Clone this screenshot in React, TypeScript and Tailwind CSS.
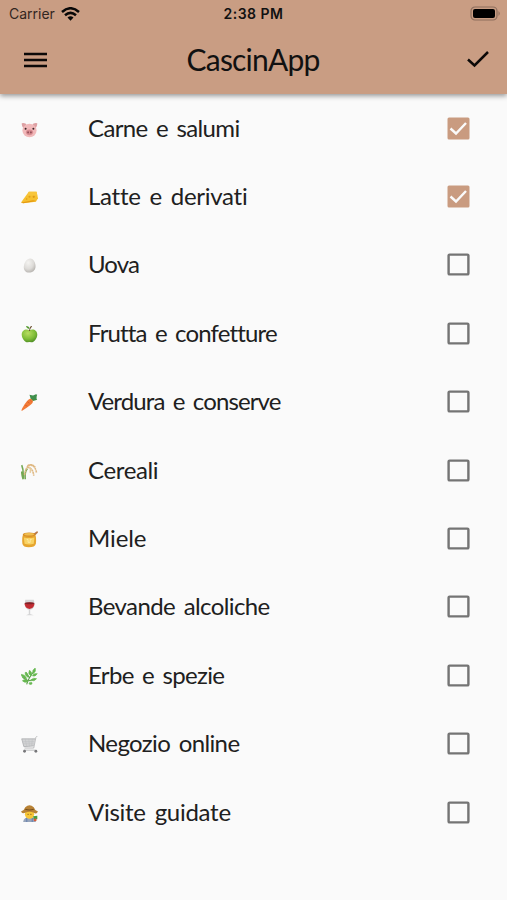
import type { ReactNode } from "react";

const Pig = () => (
  <>
    <path d="M1 3 Q7 2 8 6 L6 12 Q1 9 1 3ZM23 3 Q17 2 16 6 L18 12 Q23 9 23 3Z" fill="#dda0a3" />
    <ellipse cx="12" cy="13.5" rx="10" ry="9.5" fill="#f1b9ba" />
    <ellipse cx="12" cy="16" rx="5" ry="4" fill="#d98c92" />
    <circle cx="6.5" cy="11" r="1.4" fill="#3b2226" />
    <circle cx="17.5" cy="11" r="1.4" fill="#3b2226" />
    <ellipse cx="10" cy="16" rx="1" ry="1.7" fill="#8a4850" />
    <ellipse cx="14" cy="16" rx="1" ry="1.7" fill="#8a4850" />
  </>
);
const Cheese = () => (
  <>
    <path d="M0 19 L11 4 L22 4 L24 13 L21 18 L3 20Z" fill="#f6c02f" />
    <path d="M11 4 L22 4 L23 9 L9 9Z" fill="#f8c63c" />
    <path d="M0 19 L17 16 L22 17 L3 20Z" fill="#e59a12" />
    <circle cx="12" cy="11" r="1.4" fill="#e0a01b" />
    <circle cx="18" cy="11" r="1.6" fill="#dd9a19" />
    <circle cx="8" cy="14" r="1" fill="#dd9a19" />
  </>
);
const Egg = () => (
  <>
    <defs>
      <radialGradient id="egg" cx="0.38" cy="0.3" r="0.75">
        <stop offset="0" stopColor="#f4f3f1" />
        <stop offset="0.6" stopColor="#dddbd8" />
        <stop offset="1" stopColor="#b4b1ad" />
      </radialGradient>
    </defs>
    <path d="M13 2 C18 2 21 9 20.500 14 C20 19 16 22 11.500 22 C6 22 3.500 18 4 13 C4.500 8 8 2 13 2Z" fill="url(#egg)" />
  </>
);
const Apple = () => (
  <>
    <defs>
      <radialGradient id="apple" cx="0.4" cy="0.3" r="0.75">
        <stop offset="0" stopColor="#b8dd62" />
        <stop offset="0.6" stopColor="#7fbd37" />
        <stop offset="1" stopColor="#4c8b25" />
      </radialGradient>
    </defs>
    <path d="M12 6 C17 3 23 6 23 12 C23 18 18 23 15 23 Q12 22 9 23 C6 23 1 18 1 12 C1 6 7 3 12 6Z" fill="url(#apple)" />
    <path d="M12 7 Q12 3 15 0" stroke="#694d2d" strokeWidth="1.500" fill="none" />
    <path d="M12 4 Q8 4 7 0 Q12 0 12 4Z" fill="#559b31" />
  </>
);
const Carrot = () => (
  <>
    <path d="M14 8 Q19 2 23 1 L20 6 L23 8 L17 10Z" fill="#468a3a" />
    <path d="M12 1 L17 2 L22 0 L22 8 L14 8Z" fill="#3f8f4c" />
    <path d="M12 7 Q16 6 17 11 Q16 15 1 24 Q0 23 3 18 Q8 9 12 7Z" fill="#f27b38" />
    <path d="M9 11 l3 2 M6 16 l3 1 M13 9 l2 2" stroke="#d65725" />
  </>
);
const Rice = () => (
  <>
    <path d="M3 23 Q4 10 1 3 M6 23 Q5 12 9 8 M3 23 Q1 16 1 12" stroke="#73a853" strokeWidth="2.200" fill="none" />
    <path d="M5 17 Q7 4 13 3 Q20 3 22 14 M9 6 Q17 7 18 18 M9 4 Q15 0 20 6" stroke="#dfb984" strokeWidth="2.200" strokeDasharray="3 .6" fill="none" />
    <path d="M12 6 Q14 8 13 14" stroke="#e7ce9f" strokeWidth="2" fill="none" />
  </>
);
const Honey = () => (
  <>
    <path d="M16 5 L23 0 L24 2 L19 7Z" fill="#b7794b" />
    <path d="M3 5 Q1 9 2 18 Q3 23 11 23 Q20 23 21 18 Q22 9 20 5Z" fill="#e6a52e" />
    <ellipse cx="11.500" cy="5" rx="9" ry="3" fill="#d58c26" />
    <ellipse cx="11.500" cy="4.500" rx="7" ry="1.700" fill="#f0be50" />
    <path d="M4 9 Q12 11 19 9 L18 18 Q12 20 5 18Z" fill="#f9d364" />
    <path d="M8 12 h2 v4 h3 v-4 h2" stroke="#fff0b5" fill="none" />
  </>
);
const Wine = () => (
  <>
    <path d="M6 1 L18 1 Q22 13 13 15 L13 21 L18 23 L7 23 L11 21 L11 15 Q3 13 6 1Z" fill="#d5d5d6" />
    <path d="M5 6 Q12 4 19 6 Q19 13 12 14 Q5 13 5 6Z" fill="#c22b32" />
    <ellipse cx="12" cy="6" rx="6.500" ry="1.500" fill="#7f2027" />
  </>
);
const Herb = () => (
  <>
    <path d="M8 23 Q11 13 19 4 M10 18 L2 13 M12 14 L7 6 M11 18 L20 16" stroke="#569d45" strokeWidth="1.500" fill="none" />
    <path d="M20 0 Q22 5 17 8 Q15 3 20 0ZM12 3 Q17 6 14 11 Q9 8 12 3ZM23 8 Q20 13 16 11 Q18 7 23 8ZM22 15 Q18 20 14 17 Q17 13 22 15ZM6 6 Q11 8 10 13 Q5 11 6 6ZM0 9 Q6 9 8 15 Q2 15 0 9ZM2 18 Q7 14 10 19 Q5 22 2 18ZM15 20 Q17 24 12 23 Q10 20 15 20Z" fill="#66b850" stroke="#66b850" strokeWidth=".8" />
  </>
);
const Cart = () => (
  <>
    <path d="M1 4 L20 4 L18 14 L4 15Z" fill="#d2d3d4" />
    <path d="M23 0 L21 2 L18 17 H5 M1 4 L4 15 L18 14 M1 4 H20 M4 20 H20" stroke="#a5a6a8" fill="none" />
    <path d="M6 4 L8 15 M11 4 L12 15 M16 4 L15 14 M2 8 H19 M3 11 H18" stroke="#bcbdbf" strokeWidth=".7" fill="none" />
    <circle cx="5" cy="21.500" r="2" fill="#77777a" />
    <circle cx="21" cy="21.500" r="2" fill="#77777a" />
  </>
);
const Farmer = () => (
  <>
    <path d="M3 24 Q4 17 12 17 Q20 17 21 24Z" fill="#97a5ba" />
    <path d="M8 18 v6 M16 18 v6" stroke="#7189b3" strokeWidth="2" />
    <circle cx="12" cy="13" r="6.500" fill="#f8c636" />
    <path d="M0 9 Q5 7 6 3 Q12 -2 18 3 Q19 7 24 9 Q21 14 18 11 Q12 8 6 11 Q2 13 0 9Z" fill="#b88235" />
    <path d="M6 6 Q12 8 18 6" stroke="#76501f" strokeWidth="1.500" fill="none" />
    <path d="M17 16 L23 15 L23 20 L18 20Z" fill="#4a9b3e" />
    <circle cx="20" cy="21" r="2" fill="#d95c37" />
    <circle cx="10" cy="13" r=".8" fill="#634218" />
    <circle cx="14" cy="13" r=".8" fill="#634218" />
  </>
);

type Item = { label: string; icon: ReactNode; spacing: string; checked?: boolean };

const items: Item[] = [
  { label: "Carne e salumi", icon: <Pig />, spacing: "tracking-[-0.65px]", checked: true },
  { label: "Latte e derivati", icon: <Cheese />, spacing: "tracking-[-0.27px]", checked: true },
  { label: "Uova", icon: <Egg />, spacing: "tracking-[-0.9px]" },
  { label: "Frutta e confetture", icon: <Apple />, spacing: "tracking-[-0.85px]" },
  { label: "Verdura e conserve", icon: <Carrot />, spacing: "tracking-[-0.88px]" },
  { label: "Cereali", icon: <Rice />, spacing: "tracking-[-0.36px]" },
  { label: "Miele", icon: <Honey />, spacing: "tracking-[-0.1px]" },
  { label: "Bevande alcoliche", icon: <Wine />, spacing: "tracking-[-0.6px]" },
  { label: "Erbe e spezie", icon: <Herb />, spacing: "tracking-[-0.68px]" },
  { label: "Negozio online", icon: <Cart />, spacing: "tracking-[-0.62px]" },
  { label: "Visite guidate", icon: <Farmer />, spacing: "tracking-[-0.27px]" },
];

function Checkbox({ checked }: { checked?: boolean }) {
  return (
    <svg role="checkbox" aria-checked={!!checked} className="h-[23px] w-[23px] shrink-0" viewBox="0 0 23 23">
      {checked ? (
        <>
          <rect x="0.500" y="0.500" width="22" height="22" rx="1.500" fill="#c99b80" />
          <path d="M3.500 11.500 L9 16.500 L19 6" fill="none" stroke="#fafafa" strokeWidth="2.400" />
        </>
      ) : (
        <rect x="1.600" y="1.600" width="19.800" height="19.800" rx="1" fill="none" stroke="#747474" strokeWidth="2.400" />
      )}
    </svg>
  );
}

export default function App() {
  return (
    <div className="h-[900px] w-full overflow-hidden bg-[#fafafa] font-['Lato',sans-serif]">
      <header className="relative h-[94px] bg-[#c99d83] text-[#111] shadow-[0_2px_5px_rgba(0,0,0,0.4)]">
        <div className="grid h-[27px] grid-cols-3 items-center pr-[6px] pl-[9px] font-['Inter',sans-serif] text-[14px]">
          <div className="flex items-center gap-[6px]">
            <span className="text-[#33261f]">Carrier</span>
            <svg className="h-[14px] w-[19px]" viewBox="0 0 19 14" fill="none" stroke="#080808" strokeWidth="2.500">
              <path d="M1 5 Q9.500 -2.500 18 5" />
              <path d="M4 8.300 Q9.500 3.500 15 8.300" />
              <path d="M6.500 10.500 Q9.500 8 12.500 10.500 L9.500 13.700Z" fill="#080808" stroke="none" />
            </svg>
          </div>
          <span className="pr-[3px] text-center font-semibold tracking-[0.5px]">2:38 PM</span>
          <svg className="h-[15px] w-[31px] justify-self-end" viewBox="0 0 31 15">
            <rect x="1" y="1" width="26" height="13" rx="4" fill="none" stroke="#8d6e5d" strokeWidth="1.200" />
            <rect x="3" y="3" width="22" height="9" rx="2" fill="#000" />
            <path d="M28.500 5 Q31 7.500 28.500 10Z" fill="#8d6e5d" />
          </svg>
        </div>
        <div className="flex h-[67px] items-center justify-between pr-[18px] pb-[2px] pl-[24px]">
          <svg className="h-[16px] w-[23px]" viewBox="0 0 23 16" stroke="#0c0908" strokeWidth="2.500">
            <path d="M0 2 H23 M0 8 H23 M0 14 H23" />
          </svg>
          <h1 className="mr-[8px] pb-px text-[30px] leading-none tracking-[-0.8px] whitespace-nowrap">CascinApp</h1>
          <svg className="h-[17px] w-[22px]" viewBox="0 0 22 17" fill="none" stroke="#0c0908" strokeWidth="2.500">
            <path d="M1 8.500 L7.500 14.500 L21 1" />
          </svg>
        </div>
      </header>
      <ul>
        {items.map(({ label, icon, spacing, checked }) => (
          <li key={label} className="flex h-[68.4px] items-center pr-[37.5px] pl-[21px]">
            <svg className="mt-[2px] mr-[50px] h-[17px] w-[17px] shrink-0" viewBox="0 0 24 24">{icon}</svg>
            <span className={`grow pb-px text-[24px] leading-none [font-variant-ligatures:none] [word-spacing:3px] whitespace-nowrap text-[#202020] ${spacing}`}>{label}</span>
            <Checkbox checked={checked} />
          </li>
        ))}
      </ul>
    </div>
  );
}
